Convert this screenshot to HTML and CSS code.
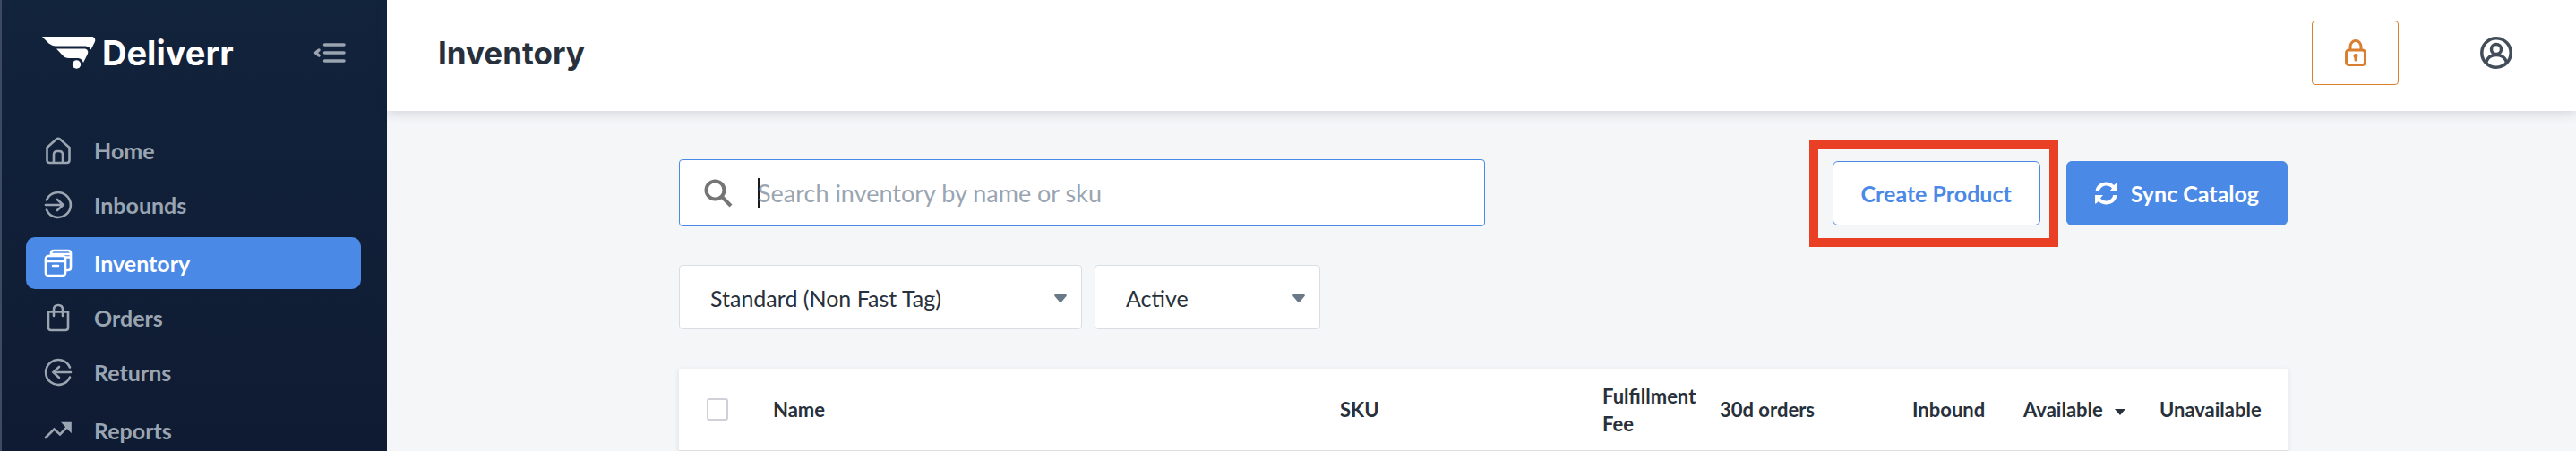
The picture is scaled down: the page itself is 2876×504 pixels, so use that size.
FILE: index.html
```html
<!DOCTYPE html>
<html lang="en">
<head>
  <meta charset="UTF-8" />
  <title>Inventory - Deliverr</title>
  <meta name="viewport" content="width=device-width, initial-scale=1.0" />
  <link rel="stylesheet" href="styles.css">
</head>
<body>

<aside class="sidebar">
  <div class="sidebar-top">
    <a href="#" class="brand">
      <svg class="brand-mark" viewBox="0 0 60 36" fill="#fff">
        <path d="M0 0H55C58.500 0 60 2.500 59 5.500L54.500 14.500C52.500 11.500 51 10.500 47 10.500H15C12 10.500 9.500 9 7.500 7.500Z"/>
        <path d="M16 13.500H47C50.500 13.500 52 16 51 19L46 29C44.500 25 42.500 24 39 24H30C26.500 24 25 23 23 21Z"/>
        <circle cx="38.500" cy="31" r="4.700"/>
      </svg>
      <span class="brand-name">Deliverr</span>
    </a>
    <button class="collapse-btn" aria-label="Collapse menu">
      <svg width="36" height="22" viewBox="0 0 36 22" fill="none" stroke="#9aa5b1" stroke-width="3.500" stroke-linecap="round">
        <path d="M12.500 2H34M12.500 11H34M12.500 20H34"/>
        <path d="M6 8L2.500 11L6 14" stroke-linejoin="round"/>
      </svg>
    </button>
  </div>

  <nav class="menu">
    <div class="menu-group">
      <a href="#" class="menu-item">
        <svg class="icon" viewBox="0 0 30 30"><path d="M2.500 12L13 2.500Q15 1 17 2.500L27.500 12V26Q27.500 29 24.500 29H5.500Q2.500 29 2.500 26Z"/><path d="M10 28.500V20Q10 16 14 16H16Q20 16 20 20V28.500"/></svg>
        Home
      </a>
      <a href="#" class="menu-item">
        <svg class="icon" viewBox="0 0 30 30"><path d="M2 9.500A14 14 0 1 1 2 20.500"/><path d="M1 15H20M14 9L20.500 15L14 21"/></svg>
        Inbounds
      </a>
    </div>
    <div class="menu-group">
      <a href="#" class="menu-item active">
        <svg class="icon" viewBox="0 0 30 30"><rect x="1" y="7" width="22" height="22" rx="3"/><path d="M1 13H23M9 18H15M7 7V4Q7 1 10 1H26Q29 1 29 4V20Q29 23 26 23H23M8 5H29M23 8.500H29"/></svg>
        Inventory
      </a>
      <a href="#" class="menu-item">
        <svg class="icon" viewBox="0 0 30 30"><path d="M4 8.500H26V26Q26 29 23 29H7Q4 29 4 26Z"/><path d="M10 13V6Q10 1 15 1T20 6V13"/></svg>
        Orders
      </a>
      <a href="#" class="menu-item">
        <svg class="icon" viewBox="0 0 30 30"><path d="M28 9.500A14 14 0 1 0 28 20.500"/><path d="M29 15H10M16 9L9.500 15L16 21"/></svg>
        Returns
      </a>
    </div>
    <div class="menu-group">
      <a href="#" class="menu-item">
        <svg class="icon" viewBox="0 0 30 30"><path d="M1 23L10.500 13.500L17 19.500L28 8"/><path d="M21 7H28.500V15Z" fill="currentColor"/></svg>
        Reports
      </a>
    </div>
  </nav>
</aside>

<div class="page">
  <header class="topbar">
    <h1>Inventory</h1>
    <div class="topbar-actions">
      <button class="lock-btn" aria-label="Lock">
        <svg width="24" height="30" viewBox="0 0 24 30" fill="none" stroke="#d97f30" stroke-width="3">
          <rect x="1.500" y="12" width="21" height="16.500" rx="3"/>
          <path d="M6 12V8A6 6.500 0 0 1 18 8V12"/>
          <path d="M12 18V23" stroke-linecap="round"/>
          <circle cx="12" cy="18.500" r="1"/>
        </svg>
      </button>
      <button class="user-btn" aria-label="Account">
        <svg width="36" height="36" viewBox="0 0 36 36" fill="none" stroke="#434d5a" stroke-width="3.500">
          <circle cx="18" cy="18" r="16.200"/>
          <circle cx="18" cy="14" r="5.500"/>
          <path d="M6.500 29C8 23 12.500 20.500 18 20.500S28 23 29.500 29"/>
        </svg>
      </button>
    </div>
  </header>

  <main>
    <div class="content">
      <div class="toolbar">
        <div class="search">
          <svg width="32" height="32" viewBox="0 0 32 32" fill="none" stroke="#757575" stroke-width="4">
            <circle cx="12.500" cy="12.500" r="10"/>
            <path d="M19.500 19.500L30 30"/>
          </svg>
          <input type="text" aria-label="Search inventory" placeholder="Search inventory by name or sku">
        </div>
        <div class="toolbar-buttons">
          <div class="highlight">
            <button class="btn">Create Product</button>
          </div>
          <button class="btn btn-primary">
            <svg width="25" height="26" viewBox="0 0 25 26" fill="#fff"><path d="M.5 11C1 4.500 6.500 .5 12.500 .5C16 .5 19 2 21 4L24 1.500Q25 1 25 2.500V11H16L19 7.500C17.500 5.500 15 4.500 12.500 4.500C9 4.500 5.500 7 4.800 11Z"/><path d="M24.500 15C24 21.500 18.500 25.500 12.500 25.500C9 25.500 6 24 4 22L1 24.500Q0 25 0 23.500V15H9L6 18.500C7.500 20.500 10 21.500 12.500 21.500C16 21.500 19.500 19 20.200 15Z"/></svg>
            Sync Catalog
          </button>
        </div>
      </div>

      <div class="filters">
        <div class="select-wrap filter-type">
          <select aria-label="Product type">
            <option>Standard (Non Fast Tag)</option>
          </select>
          <svg class="arrow" width="14" height="9" viewBox="0 0 14 9" fill="#697988"><path d="M1 0H13Q14.500 .5 13.500 2L8 8.500Q7 9.300 6 8.500L.5 2Q-.5 .5 1 0Z"/></svg>
        </div>
        <div class="select-wrap filter-status">
          <select aria-label="Status">
            <option>Active</option>
          </select>
          <svg class="arrow" width="14" height="9" viewBox="0 0 14 9" fill="#697988"><path d="M1 0H13Q14.500 .5 13.500 2L8 8.500Q7 9.300 6 8.500L.5 2Q-.5 .5 1 0Z"/></svg>
        </div>
      </div>

      <table class="inventory-table">
        <thead>
          <tr>
            <th class="col-check"><input type="checkbox" aria-label="Select all"></th>
            <th>Name</th>
            <th class="col-sku">SKU</th>
            <th class="col-fee">Fulfillment Fee</th>
            <th class="col-orders">30d orders</th>
            <th class="col-inbound">Inbound</th>
            <th class="col-available">Available <svg class="sort" width="12" height="7" viewBox="0 0 12 7" fill="#28313b"><path d="M0 0H12L6 7Z"/></svg></th>
            <th class="col-unavailable">Unavailable</th>
          </tr>
        </thead>
      </table>
    </div>
  </main>
</div>

</body>
</html>
```
FILE: styles.css
```css
* {
  margin: 0; padding: 0; box-sizing: border-box;
  font-family: Lato, sans-serif;
}
body {
  display: flex;
  height: 100vh;
  overflow: hidden;
  background: #f4f6f8;
  color: #28313b;
}
a {
  text-decoration: none;
}
button {
  cursor: pointer;
}

.sidebar {
  width: 432px;
  flex-shrink: 0;
  border-left: 2px solid #3d4a5f;
  background: linear-gradient(#12233c, #0f1b33);
}
.sidebar-top {
  display: flex;
  justify-content: space-between;
  align-items: center;
  height: 117px;
  padding: 0 46px 0 45px;
}
.brand {
  display: flex;
  align-items: center;
  gap: 7px;
}
.brand-mark {
  width: 60px;
  height: 36px;
}
.brand-name {
  font-family: Inter, sans-serif;
  font-size: 38px;
  font-weight: 700;
  line-height: 36px;
  color: #fff;
}
.collapse-btn {
  display: flex;
  background: none;
  border: none;
}
.menu {
  display: flex;
  flex-direction: column;
  gap: 7px;
  padding: 22px 29px 0 27px;
}
.menu-group {
  display: flex;
  flex-direction: column;
  gap: 3px;
}
.menu-item {
  display: flex;
  align-items: center;
  gap: 25px;
  height: 58px;
  padding: 0 21px;
  border-radius: 10px;
  font-size: 25px;
  font-weight: 700;
  color: #9aa5b1;
}
.menu-item.active {
  background: #4a89e6;
  color: #fff;
}
.icon {
  width: 30px;
  height: 30px;
  overflow: visible;
  fill: none;
  stroke: currentColor;
  stroke-width: 2.6;
  stroke-linecap: round;
}

.page {
  flex: 1;
  min-width: 0;
}
.topbar {
  position: relative;
  display: flex;
  justify-content: space-between;
  align-items: center;
  height: 124px;
  padding: 0 71px 6px 57px;
  background: #fff;
  box-shadow: 0 2px 12px rgba(40, 50, 90, 0.18);
}
.topbar h1 {
  font-family: Inter, sans-serif;
  font-size: 35px;
  font-weight: 700;
}
.topbar-actions {
  display: flex;
  align-items: center;
  gap: 91px;
}
.lock-btn {
  display: flex;
  align-items: center;
  justify-content: center;
  width: 97px;
  height: 72px;
  background: #fff;
  border: 1px solid #d97f30;
  border-radius: 4px;
}
.user-btn {
  display: flex;
  background: none;
  border: none;
}

main {
  padding: 54px 0 0 4px;
}
.content {
  max-width: 1796px;
  margin: 0 auto;
}
.toolbar {
  display: flex;
  justify-content: space-between;
  align-items: center;
}
.search {
  display: flex;
  align-items: center;
  gap: 28px;
  width: 900px;
  height: 75px;
  padding: 0 27px;
  background: #fff;
  border: 1px solid #4a89e6;
  border-radius: 4px;
}
.search input {
  flex: 1;
  height: 34px;
  border: none;
  outline: none;
  background: linear-gradient(#1a1a1a, #1a1a1a) left / 2px 100% no-repeat;
  font-size: 27px;
  color: #28313b;
}
.search input::placeholder {
  color: #9aa5b1;
}
.toolbar-buttons {
  display: flex;
  align-items: center;
  gap: 29px;
}
.highlight {
  position: relative;
}
/* frame drawn around the button */
.highlight::after {
  content: "";
  position: absolute;
  inset: -24px -20px -24px -26px;
  border: 10px solid #e93f25;
  pointer-events: none;
}
.btn {
  display: flex;
  align-items: center;
  gap: 15px;
  height: 72px;
  padding: 0 31px;
  background: #fff;
  border: 1px solid #4a89e6;
  border-radius: 6px;
  font-size: 25px;
  font-weight: 700;
  color: #4a89e6;
}
.btn-primary {
  background: #4a89e6;
  color: #fff;
}

.filters {
  display: flex;
  gap: 14px;
  margin-top: 43px;
}
.select-wrap {
  position: relative;
}
.filter-type {
  width: 450px;
}
.filter-status {
  width: 252px;
}
.select-wrap select {
  appearance: none;
  width: 100%;
  height: 72px;
  padding: 2px 34px 0;
  background: #fff;
  border: 1px solid #d9dee5;
  border-radius: 4px;
  font-size: 25px;
  color: #28313b;
}
.arrow {
  position: absolute;
  right: 17px;
  top: 33px;
  pointer-events: none;
}

.inventory-table {
  width: 100%;
  margin-top: 44px;
  table-layout: fixed;
  border-collapse: collapse;
  background: #fff;
  box-shadow: 0 2px 6px rgba(40, 50, 90, 0.12);
}
.inventory-table th {
  height: 92px;
  border-bottom: 2px solid #ddd;
  text-align: left;
  vertical-align: middle;
  font-size: 22px;
  font-weight: 700;
  line-height: 31px;
}
.col-check {
  width: 105px;
  padding-left: 31px;
}
.col-check input {
  display: block;
  appearance: none;
  width: 24px;
  height: 25px;
  border: 2px solid #d0d0d8;
  border-radius: 3px;
}
.col-sku { width: 293px; }
.col-fee { width: 131px; }
.col-orders { width: 215px; }
.col-inbound { width: 124px; }
.col-available { width: 152px; }
.col-unavailable { width: 143px; }
.sort {
  margin-left: 8px;
  vertical-align: middle;
}
```
